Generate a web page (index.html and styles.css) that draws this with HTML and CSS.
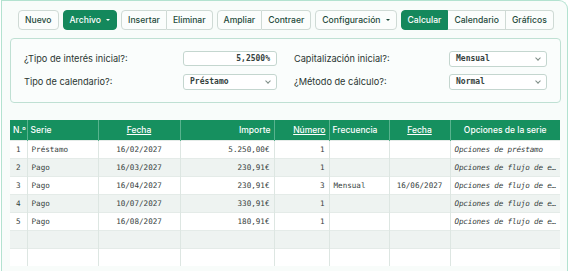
FILE: index.html
```html
<!DOCTYPE html>
<html lang="es">
	<head>
		<meta charset="UTF-8" />
		<meta name="viewport" content="width=device-width, initial-scale=1.0" />
		<title>Préstamo</title>
		<link rel="stylesheet" href="styles.css">
	</head>
	<body>
		<div class="frame">
			<div class="toolbar">
				<button class="btn">Nuevo</button>
				<button class="btn primary">Archivo <span class="caret"></span></button>
				<div class="group">
					<button class="btn">Insertar</button>
					<button class="btn">Eliminar</button>
				</div>
				<div class="group">
					<button class="btn">Ampliar</button>
					<button class="btn">Contraer</button>
				</div>
				<button class="btn">Configuración <span class="caret"></span></button>
				<div class="group">
					<button class="btn primary">Calcular</button>
					<button class="btn">Calendario</button>
					<button class="btn">Gráficos</button>
				</div>
			</div>
			<div class="panel">
				<div class="field">
					<label>¿Tipo de interés inicial?:</label>
					<div class="input num">5,2500%</div>
				</div>
				<div class="field">
					<label>Capitalización inicial?:</label>
					<div class="input select wide">Mensual<span class="chev"></span></div>
				</div>
				<div class="field">
					<label>Tipo de calendario?:</label>
					<div class="input select">Préstamo<span class="chev"></span></div>
				</div>
				<div class="field">
					<label>¿Método de cálculo?:</label>
					<div class="input select wide">Normal<span class="chev"></span></div>
				</div>
			</div>
			<table class="grid">
				<colgroup>
					<col class="c-n">
					<col class="c-serie">
					<col class="c-fecha">
					<col class="c-importe">
					<col class="c-numero">
					<col class="c-frec">
					<col class="c-fecha2">
					<col>
				</colgroup>
				<thead>
					<tr>
						<th class="l">N.º</th>
						<th class="l">Serie</th>
						<th><u>Fecha</u></th>
						<th class="r">Importe</th>
						<th class="r"><u>Número</u></th>
						<th class="l">Frecuencia</th>
						<th><u>Fecha</u></th>
						<th>Opciones de la serie</th>
					</tr>
				</thead>
				<tbody>
					<tr><td class="c">1</td><td>Préstamo</td><td class="c">16/02/2027</td><td class="r">5.250,00€</td><td class="r">1</td><td></td><td></td><td class="opt">Opciones de préstamo</td></tr>
					<tr><td class="c">2</td><td>Pago</td><td class="c">16/03/2027</td><td class="r">230,91€</td><td class="r">1</td><td></td><td></td><td class="opt">Opciones de flujo de efectivo</td></tr>
					<tr><td class="c">3</td><td>Pago</td><td class="c">16/04/2027</td><td class="r">230,91€</td><td class="r">3</td><td>Mensual</td><td class="c">16/06/2027</td><td class="opt">Opciones de flujo de efectivo</td></tr>
					<tr><td class="c">4</td><td>Pago</td><td class="c">10/07/2027</td><td class="r">330,91€</td><td class="r">1</td><td></td><td></td><td class="opt">Opciones de flujo de efectivo</td></tr>
					<tr><td class="c">5</td><td>Pago</td><td class="c">16/08/2027</td><td class="r">180,91€</td><td class="r">1</td><td></td><td></td><td class="opt">Opciones de flujo de efectivo</td></tr>
					<tr><td></td><td></td><td></td><td></td><td></td><td></td><td></td><td></td></tr>
					<tr><td></td><td></td><td></td><td></td><td></td><td></td><td></td><td></td></tr>
				</tbody>
			</table>
		</div>
	</body>
</html>
```

FILE: styles.css
```css
body {
	margin: 0;
	background: #ffffff;
	font-family: Inter, "Noto Sans", sans-serif;
	color: #25352f;
	overflow: hidden;
}
.frame {
	box-sizing: border-box;
	width: 567px;
	height: 271px;
	margin-left: 1px;
	border: 1.5px solid #b3e2d0;
	border-bottom: none;
	border-radius: 0 9px 0 0;
	background: #f8fcfa;
	padding: 8px 6px 0 8px;
	overflow: hidden;
}
.toolbar {
	display: flex;
	align-items: center;
	gap: 4px;
	padding-left: 8px;
	height: 21px;
}
.group {
	display: flex;
}
.btn {
	height: 20px;
	padding: 0 6px;
	border: 1px solid #cfdad5;
	border-radius: 4px;
	background: #fbfdfc;
	font-family: Inter, sans-serif;
	font-size: 8.6px;
	font-weight: 500;
	color: #1e4a3b;
	display: flex;
	align-items: center;
	gap: 5px;
}
.group .btn {
	border-radius: 0;
}
.group .btn + .btn {
	border-left: none;
}
.group .btn:first-child {
	border-radius: 4px 0 0 4px;
}
.group .btn:last-child {
	border-radius: 0 4px 4px 0;
}
.btn.primary {
	background: #14885c;
	border-color: #14885c;
	color: #ffffff;
}
.caret {
	width: 0;
	height: 0;
	border-left: 2.5px solid transparent;
	border-right: 2.5px solid transparent;
	border-top: 2.5px solid currentColor;
}
.panel {
	margin-top: 8px;
	box-sizing: border-box;
	width: 551px;
	height: 65px;
	border: 1px solid #bfe0d3;
	border-radius: 4px;
	background: #fafdfc;
	padding: 12px 13px 0 13px;
	display: grid;
	grid-template-columns: 1fr 1fr;
	column-gap: 17px;
	row-gap: 8px;
	align-content: start;
}
.field {
	display: flex;
	align-items: center;
	justify-content: space-between;
	height: 15px;
}
.field label {
	font-size: 9.2px;
	color: #2a3631;
}
.input {
	box-sizing: border-box;
	width: 94px;
	height: 15px;
	border: 1px solid #c4d6cf;
	border-radius: 3px;
	background: #ffffff;
	font-family: "DejaVu Sans Mono", monospace;
	font-size: 8px;
	font-weight: bold;
	color: #34423d;
	display: flex;
	align-items: center;
	padding: 0 6px;
}
.input.wide {
	width: 98px;
}
.input.num {
	justify-content: flex-end;
}
.input.select {
	justify-content: space-between;
	height: 16px;
}
.chev {
	width: 3px;
	height: 3px;
	border-right: 1px solid #7d8c86;
	border-bottom: 1px solid #7d8c86;
	transform: translateY(-1px) rotate(45deg);
}
.grid {
	margin-top: 17px;
	width: 550px;
	border-collapse: collapse;
	table-layout: fixed;
	background: #ffffff;
}
.c-n { width: 17px; }
.c-serie { width: 71px; }
.c-fecha { width: 82px; }
.c-importe { width: 94px; }
.c-numero { width: 55px; }
.c-frec { width: 60px; }
.c-fecha2 { width: 61px; }
.grid th {
	height: 20px;
	padding: 0 3px;
	background: #16905f;
	color: #ffffff;
	font-size: 8.5px;
	font-weight: 500;
	text-align: center;
	border-left: 1px solid #58b38e;
	white-space: nowrap;
	overflow: hidden;
}
.grid th:first-child {
	border-left: none;
}
.grid th.l {
	text-align: left;
}
.grid th.r {
	text-align: right;
}
.grid td {
	height: 17px;
	padding: 0 4px;
	border-left: 1px solid #dde6e2;
	border-top: 1px solid #e4ebe8;
	font-family: "DejaVu Sans Mono", monospace;
	font-size: 7.6px;
	color: #36413d;
	white-space: nowrap;
	overflow: hidden;
	text-overflow: ellipsis;
}
.grid td:first-child {
	border-left: none;
}
.grid tbody tr:nth-child(even) td {
	background: #eef3f1;
}
.grid td.c {
	text-align: center;
}
.grid td.r {
	text-align: right;
}
.grid td.opt {
	font-style: italic;
	padding: 0 2px 0 4px;
	letter-spacing: -0.15px;
}
```
